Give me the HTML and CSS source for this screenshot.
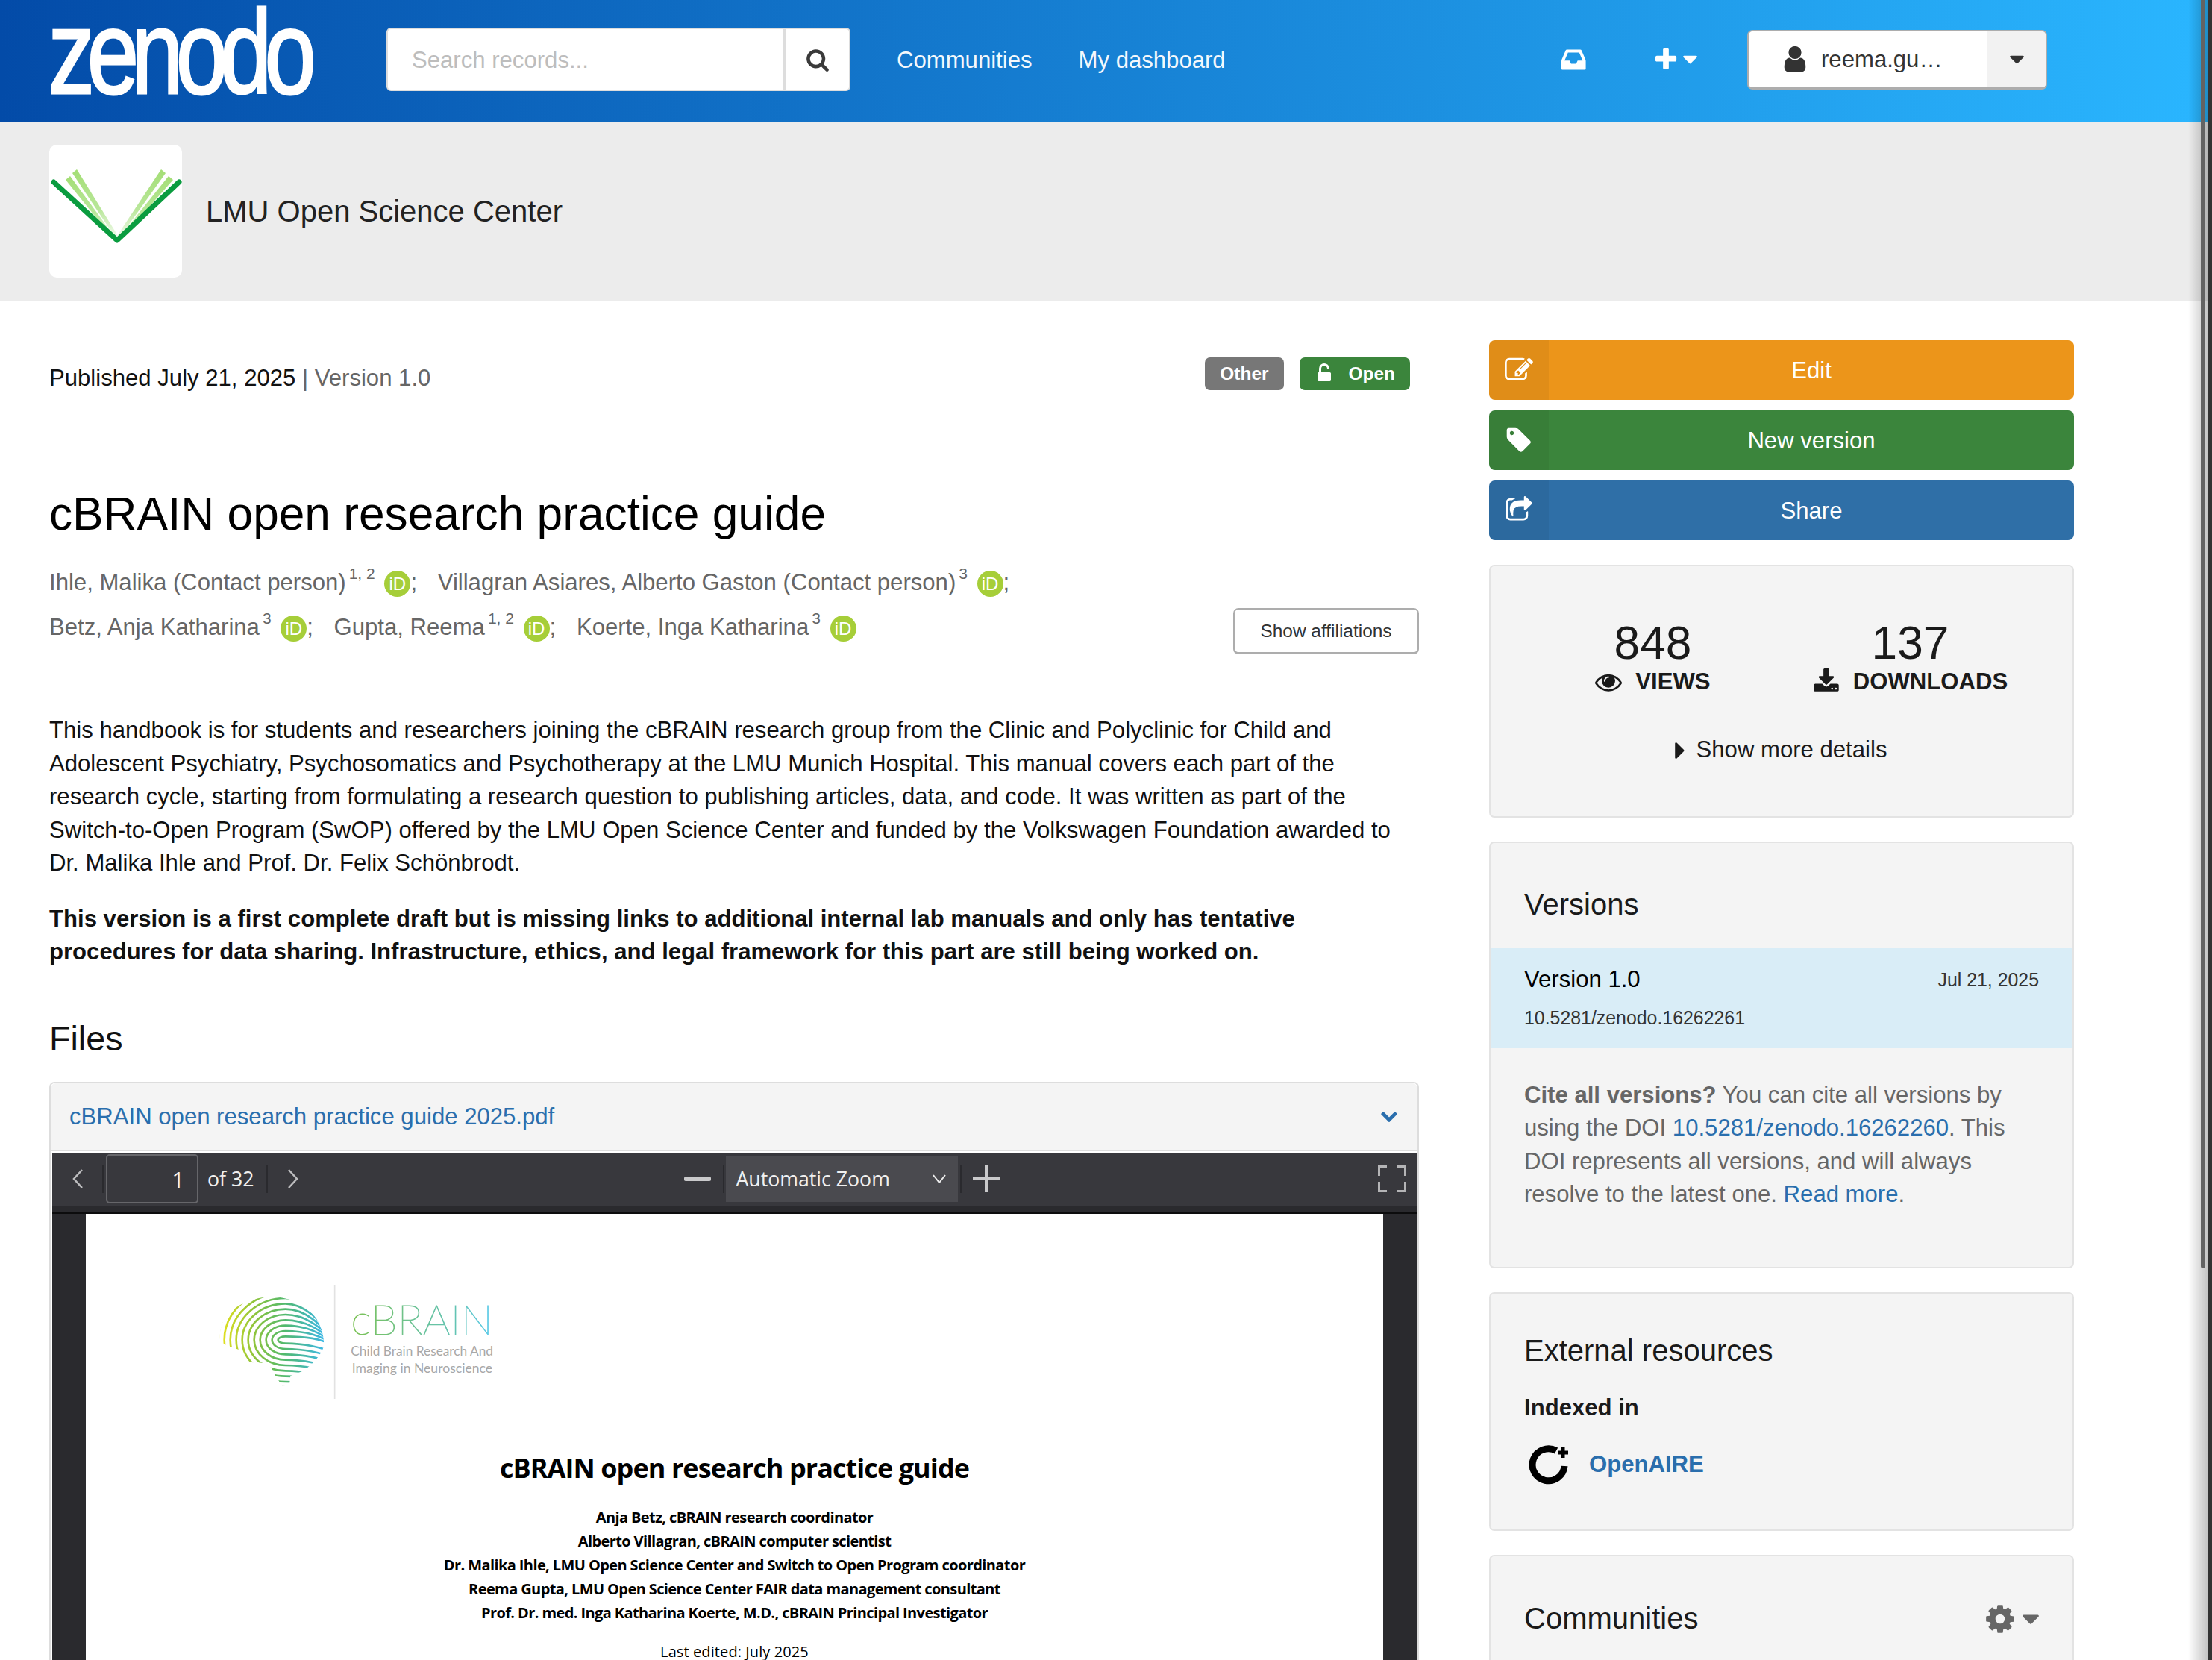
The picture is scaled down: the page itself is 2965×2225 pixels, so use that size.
FILE: index.html
```html
<!DOCTYPE html>
<html lang="en">
<head>
<meta charset="utf-8">
<title>cBRAIN open research practice guide</title>
<link rel="stylesheet" href="styles.css">
</head>
<body>
<svg class="defs" width="0" height="0" aria-hidden="true">
  <symbol id="i-search" viewBox="0 0 1792 1792"><path d="M1216 832q0-185-131.5-316.5t-316.5-131.5-316.5 131.5-131.5 316.5 131.5 316.5 316.5 131.5 316.5-131.5 131.5-316.5zm512 832q0 52-38 90t-90 38q-54 0-90-38l-343-342q-179 124-399 124-143 0-273.5-55.5t-225-150-150-225-55.5-273.5 55.5-273.5 150-225 225-150 273.5-55.5 273.5 55.5 225 150 150 225 55.5 273.5q0 220-124 399l343 343q37 37 37 90z"/></symbol>
  <symbol id="i-caret-down" viewBox="0 0 1792 1792"><path d="M1408 704q0 26-19 45l-448 448q-19 19-45 19t-45-19l-448-448q-19-19-19-45t19-45 45-19h896q26 0 45 19t19 45z"/></symbol>
  <symbol id="i-caret-right" viewBox="0 0 1792 1792"><path d="M1152 896q0 26-19 45l-448 448q-19 19-45 19t-45-19-19-45v-896q0-26 19-45t45-19 45 19l448 448q19 19 19 45z"/></symbol>
  <symbol id="i-plus" viewBox="0 0 1792 1792"><path d="M1600 736v192q0 40-28 68t-68 28h-416v416q0 40-28 68t-68 28h-192q-40 0-68-28t-28-68v-416h-416q-40 0-68-28t-28-68v-192q0-40 28-68t68-28h416v-416q0-40 28-68t68-28h192q40 0 68 28t28 68v416h416q40 0 68 28t28 68z"/></symbol>
  <symbol id="i-user" viewBox="0 0 1792 1792"><path d="M1536 1399q0 109-62.5 187t-150.5 78h-854q-88 0-150.5-78t-62.5-187q0-85 8.5-160.5t31.5-152 58.5-131 94-89 134.5-34.5q131 128 313 128t313-128q76 0 134.5 34.5t94 89 58.5 131 31.5 152 8.5 160.5zm-256-887q0 159-112.5 271.5t-271.5 112.5-271.5-112.5-112.5-271.5 112.5-271.5 271.5-112.5 271.5 112.5 112.5 271.5z"/></symbol>
  <symbol id="i-inbox" viewBox="0 0 1792 1792"><path d="M1023 960h316q-1-3-2.5-8.5t-2.5-7.5l-212-496h-708l-212 496q-1 3-2.5 8.5t-2.5 7.5h316l95 192h320zm513 30v482q0 26-19 45t-45 19h-1408q-26 0-45-19t-19-45v-482q0-62 25-123l238-552q10-25 36.5-42t52.5-17h832q26 0 52.5 17t36.5 42l238 552q25 61 25 123z"/></symbol>
  <symbol id="i-unlock" viewBox="0 0 1792 1792"><path d="M1376 768q40 0 68 28t28 68v576q0 40-28 68t-68 28h-960q-40 0-68-28t-28-68v-576q0-40 28-68t68-28h32v-320q0-185 131.5-316.5t316.5-131.5 316.5 131.5 131.5 316.5q0 26-19 45t-45 19h-64q-26 0-45-19t-19-45q0-106-75-181t-181-75-181 75-75 181v320h736z"/></symbol>
  <symbol id="i-edit" viewBox="0 0 1792 1792"><path d="M888 1184l116-116-152-152-116 116v56h96v96h56zm440-720q-16-16-33 1l-350 350q-17 17-1 33t33-1l350-350q17-17 1-33zm80 594v190q0 119-84.5 203.5t-203.5 84.5h-832q-119 0-203.5-84.5t-84.5-203.5v-832q0-119 84.5-203.5t203.5-84.5h832q63 0 117 25 15 7 18 23 3 17-9 29l-49 49q-14 14-32 8-23-6-45-6h-832q-66 0-113 47t-47 113v832q0 66 47 113t113 47h832q66 0 113-47t47-113v-126q0-13 9-22l64-64q15-15 35-7t20 29zm-96-738l288 288-672 672h-288v-288zm444 132l-92 92-288-288 92-92q28-28 68-28t68 28l152 152q28 28 28 68t-28 68z"/></symbol>
  <symbol id="i-tag" viewBox="0 0 1792 1792"><path d="M576 448q0-53-37.5-90.5t-90.5-37.5-90.5 37.5-37.5 90.5 37.5 90.5 90.5 37.5 90.5-37.5 37.5-90.5zm1067 576q0 53-37 90l-491 492q-39 37-91 37-53 0-90-37l-715-716q-38-37-64.5-101t-26.5-117v-416q0-52 38-90t90-38h416q53 0 117 26.5t102 64.5l715 714q37 39 37 91z"/></symbol>
  <symbol id="i-share" viewBox="0 0 1792 1792"><path d="M1472 989v259q0 119-84.5 203.5t-203.5 84.5h-832q-119 0-203.5-84.5t-84.5-203.5v-832q0-119 84.5-203.5t203.5-84.5h255q13 0 22.5 9.5t9.5 22.5q0 27-26 32-77 26-133 60-10 4-16 4h-112q-66 0-113 47t-47 113v832q0 66 47 113t113 47h832q66 0 113-47t47-113v-214q0-19 18-29 28-13 54-37 16-16 35-8 21 9 21 29zm237-496l-384 384q-18 19-45 19-12 0-25-5-39-17-39-59v-192h-160q-323 0-438 131-119 137-74 473 3 23-20 34-8 2-12 2-16 0-26-13-10-14-21-31t-39.5-68.5-49.5-99.5-38.5-114-17.5-122q0-49 3.5-91t14-90 28-88 47-81.5 68.5-74 94.5-61.5 124.5-48.5 159.5-30.5 196.5-11h160v-192q0-42 39-59 13-5 25-5 26 0 45 19l384 384q19 19 19 45t-19 45z"/></symbol>
  <symbol id="i-eye" viewBox="0 0 1792 1792"><path d="M1664 960q-152-236-381-353 61 104 61 225 0 185-131.5 316.5t-316.5 131.5-316.5-131.5-131.5-316.5q0-121 61-225-229 117-381 353 133 205 333.5 326.5t434.5 121.5 434.5-121.5 333.5-326.5zm-720-384q0-20-14-34t-34-14q-125 0-214.5 89.5t-89.5 214.5q0 20 14 34t34 14 34-14 14-34q0-86 61-147t147-61q20 0 34-14t14-34zm848 384q0 34-20 69-140 230-376.5 368.5t-499.5 138.5-499.5-139-376.5-368q-20-35-20-69t20-69q140-229 376.5-368t499.5-139 499.5 139 376.5 368q20 35 20 69z"/></symbol>
  <symbol id="i-download" viewBox="0 0 1792 1792"><path d="M1344 1344q0-26-19-45t-45-19-45 19-19 45 19 45 45 19 45-19 19-45zm256 0q0-26-19-45t-45-19-45 19-19 45 19 45 45 19 45-19 19-45zm128-224v320q0 40-28 68t-68 28h-1472q-40 0-68-28t-28-68v-320q0-40 28-68t68-28h465l135 136q58 56 136 56t136-56l136-136h464q40 0 68 28t28 68zm-325-569q17 41-14 70l-448 448q-18 19-45 19t-45-19l-448-448q-31-29-14-70 17-39 59-39h256v-448q0-26 19-45t45-19h256q26 0 45 19t19 45v448h256q42 0 59 39z"/></symbol>
  <symbol id="i-chevron-down" viewBox="0 0 1792 1792"><path d="M1683 808l-742 741q-19 19-45 19t-45-19l-742-741q-19-19-19-45.5t19-45.5l166-165q19-19 45-19t45 19l531 531 531-531q19-19 45-19t45 19l166 165q19 19 19 45.5t-19 45.5z"/></symbol>
  <symbol id="i-cog" viewBox="0 0 1792 1792"><path d="M1152 896q0-106-75-181t-181-75-181 75-75 181 75 181 181 75 181-75 75-181zm512-109v222q0 12-8 23t-20 13l-185 28q-19 54-39 91 35 50 107 138 10 12 10 25t-9 23q-27 37-99 108t-94 71q-12 0-26-9l-138-108q-44 23-91 38-16 136-29 186-7 28-36 28h-222q-14 0-24.5-8.5t-11.5-21.5l-28-184q-49-16-90-37l-141 107q-10 9-25 9-14 0-25-11-126-114-165-168-7-10-7-23 0-12 8-23 15-21 51-66.5t54-70.5q-27-50-41-99l-183-27q-13-2-21-12.5t-8-23.5v-222q0-12 8-23t19-13l186-28q14-46 39-92-40-57-107-138-10-12-10-24 0-10 9-23 26-36 98.5-107.5t94.5-71.5q13 0 26 10l138 107q44-23 91-38 16-136 29-186 7-28 36-28h222q14 0 24.5 8.5t11.5 21.5l28 184q49 16 90 37l142-107q9-9 24-9 13 0 25 10 129 119 165 170 7 8 7 22 0 12-8 23-15 21-51 66.5t-54 70.5q26 50 41 98l183 28q13 2 21 12.5t8 23.5z"/></symbol>
</svg>

<header class="topbar">
  <svg class="logo" viewBox="0 0 356 130" role="img" aria-label="zenodo"><text class="logo-text" x="-2" y="116" transform="scale(.78 1)">zenodo</text></svg>
  <form class="search">
    <input class="search-input" type="text" placeholder="Search records...">
    <span class="search-btn"><svg class="ic ic-search"><use href="#i-search"/></svg></span>
  </form>
  <nav class="nav">
    <a class="nav-link">Communities</a>
    <a class="nav-link">My dashboard</a>
  </nav>
  <div class="top-actions">
    <svg class="ic ic-inbox"><use href="#i-inbox"/></svg>
    <span class="plus"><svg class="ic ic-plus"><use href="#i-plus"/></svg><svg class="ic ic-plus-caret"><use href="#i-caret-down"/></svg></span>
    <div class="user">
      <span class="user-main"><svg class="ic ic-user"><use href="#i-user"/></svg><span class="user-name">reema.gu…</span></span>
      <span class="user-caret"><svg class="ic ic-user-caret"><use href="#i-caret-down"/></svg></span>
    </div>
  </div>
</header>

<section class="community">
  <div class="community-logo">
    <svg class="v-logo" viewBox="0 0 178 178">
      <defs>
        <linearGradient id="v-fade" x1="0" y1="0" x2="0" y2="1">
          <stop offset="0" stop-color="#a4de76"/>
          <stop offset=".6" stop-color="#b9e79a"/>
          <stop offset="1" stop-color="#f0faea"/>
        </linearGradient>
      </defs>
      <polygon class="v-light" points="31,38 37,33 92,122 87,122"/>
      <polygon class="v-light" points="22,47 28,42 88,124 84,124"/>
      <polygon class="v-light" points="150,33 156,38 96,122 91,122"/>
      <polygon class="v-light" points="160,42 166,47 98,124 94,124"/>
      <polyline class="v-dark" points="6,50 91,128 174,50"/>
    </svg>
  </div>
  <span class="community-name">LMU Open Science Center</span>
</section>

<main class="content">
  <article class="record">
    <div class="meta">
      <p class="published">Published July 21, 2025 <span class="muted">| Version 1.0</span></p>
      <div class="badges">
        <span class="badge badge-gray">Other</span>
        <span class="badge badge-green"><svg class="ic ic-unlock"><use href="#i-unlock"/></svg>Open</span>
      </div>
    </div>
    <h1 class="title">cBRAIN open research practice guide</h1>
    <div class="creators-row">
      <div class="creators">
        <div class="creator-line">
          <span class="creator">Ihle, Malika (Contact person)<sup>1, 2</sup> <span class="orcid">iD</span>;</span>
          <span class="creator">Villagran Asiares, Alberto Gaston (Contact person)<sup>3</sup> <span class="orcid">iD</span>;</span>
        </div>
        <div class="creator-line">
          <span class="creator">Betz, Anja Katharina<sup>3</sup> <span class="orcid">iD</span>;</span>
          <span class="creator">Gupta, Reema<sup>1, 2</sup> <span class="orcid">iD</span>;</span>
          <span class="creator">Koerte, Inga Katharina<sup>3</sup> <span class="orcid">iD</span></span>
        </div>
      </div>
      <button class="affil-btn" type="button">Show affiliations</button>
    </div>
    <p class="abstract">This handbook is for students and researchers joining the cBRAIN research group from the Clinic and Polyclinic for Child and Adolescent Psychiatry, Psychosomatics and Psychotherapy at the LMU Munich Hospital. This manual covers each part of the research cycle, starting from formulating a research question to publishing articles, data, and code. It was written as part of the Switch-to-Open Program (SwOP) offered by the LMU Open Science Center and funded by the Volkswagen Foundation awarded to Dr. Malika Ihle and Prof. Dr. Felix Schönbrodt.</p>
    <p class="abstract abstract-bold">This version is a first complete draft but is missing links to additional internal lab manuals and only has tentative procedures for data sharing. Infrastructure, ethics, and legal framework for this part are still being worked on.</p>
    <h2 class="files-title">Files</h2>
    <section class="file-panel">
      <div class="file-head">
        <a class="file-link">cBRAIN open research practice guide 2025.pdf</a>
        <svg class="ic ic-chevron"><use href="#i-chevron-down"/></svg>
      </div>
      <div class="viewer">
        <div class="toolbar">
          <svg class="tool-arrow" viewBox="0 0 16 26"><path d="M14 1 3 13l11 12"/></svg>
          <span class="tool-sep tool-sep-first"></span>
          <input class="page-input" type="text" value="1">
          <span class="of-pages">of 32</span>
          <span class="tool-sep tool-sep-of"></span>
          <svg class="tool-arrow tool-next" viewBox="0 0 16 26"><path d="M2 1l11 12L2 25"/></svg>
          <span class="tool-minus"></span>
          <span class="tool-sep tool-sep-minus"></span>
          <div class="zoom-select">
            <span>Automatic Zoom</span>
            <svg class="zoom-chevron" viewBox="0 0 18 12"><path d="M1 1l8 10 8-10"/></svg>
          </div>
          <span class="tool-sep tool-sep-plus"></span>
          <svg class="tool-plus" viewBox="0 0 36 36"><path d="M18 0v36M0 18h36"/></svg>
          <svg class="tool-full" viewBox="0 0 38 36"><path d="M12 1.500H1.500V14M26 1.500h10.500V14M12 34.500H1.500V22M26 34.500h10.500V22"/></svg>
        </div>
        <div class="toolbar-shade"></div>
        <div class="pdf-stage">
          <div class="pdf-page">
            <svg class="cbrain" viewBox="0 0 1560 720" role="img" aria-label="cBRAIN logo">
              <defs>
                <linearGradient id="brain-grad" gradientUnits="userSpaceOnUse" x1="160" y1="0" x2="580" y2="0">
                  <stop offset="0" stop-color="#e8e21b"/>
                  <stop offset=".32" stop-color="#92c53a"/>
                  <stop offset=".62" stop-color="#52b96c"/>
                  <stop offset="1" stop-color="#3db8e6"/>
                </linearGradient>
                <linearGradient id="word-grad" gradientUnits="userSpaceOnUse" x1="690" y1="0" x2="1258" y2="0">
                  <stop offset="0" stop-color="#7cc254"/>
                  <stop offset=".45" stop-color="#6cc295"/>
                  <stop offset=".75" stop-color="#62c4b5"/>
                  <stop offset="1" stop-color="#5ccbec"/>
                </linearGradient>
                <clipPath id="brain-clip">
                  <path d="M160 350C160 300 175 250 210 225C250 195 310 170 375 172C450 175 510 205 550 260C570 295 580 330 580 370C565 410 530 450 490 472L445 490L440 532L412 530L385 490C375 465 360 445 350 438L272 434C255 415 245 400 240 385L190 368Z"/>
                </clipPath>
              </defs>
              <g class="brain-lines" clip-path="url(#brain-clip)">
                <path d="M640 374C560 337 505 331 425 331C409 331 395 337 395 345C395 353 409 359 425 359C505 359 560 374 640 399"/>
                <path d="M640 371C560 325 505 309 425 309C395 309 371 325 371 345C371 365 395 381 425 381C505 381 560 396 640 421"/>
                <path d="M640 369C560 313 505 287 425 287C382 287 347 313 347 345C347 377 382 403 425 403C505 403 560 418 640 443"/>
                <path d="M640 367C560 301 505 265 425 265C369 265 323 301 323 345C323 389 369 425 425 425C505 425 560 440 640 465"/>
                <path d="M640 365C560 289 505 243 425 243C356 243 299 289 299 345C299 401 356 447 425 447C505 447 560 462 640 487"/>
                <path d="M640 363C560 277 505 221 425 221C343 221 275 277 275 345C275 413 343 469 425 469C505 469 560 484 640 509"/>
                <path d="M640 360C560 265 505 199 425 199C329 199 251 265 251 345C251 425 329 491 425 491C505 491 560 506 640 531"/>
                <path d="M640 358C560 253 505 177 425 177C316 177 227 253 227 345C227 437 316 513 425 513C505 513 560 528 640 553"/>
                <path d="M640 356C560 241 505 155 425 155C303 155 203 241 203 345C203 449 303 535 425 535"/>
                <path d="M425 133C290 133 179 228 179 345C179 462 290 557 425 557"/>
                <path d="M425 111C277 111 155 216 155 345C155 474 277 579 425 579"/>
              </g>
              <line class="cbrain-rule" x1="623" y1="125" x2="623" y2="582"/>
              <text class="cbrain-word" x="688" y="323" textLength="572" lengthAdjust="spacingAndGlyphs">cBRAIN</text>
              <text class="cbrain-sub" x="688" y="408" textLength="572" lengthAdjust="spacingAndGlyphs">Child Brain Research And</text>
              <text class="cbrain-sub" x="692" y="478" textLength="565" lengthAdjust="spacingAndGlyphs">Imaging in Neuroscience</text>
            </svg>
            <h3 class="pdf-title">cBRAIN open research practice guide</h3>
            <div class="pdf-authors">
              <p class="pdf-author">Anja Betz, cBRAIN research coordinator</p>
              <p class="pdf-author">Alberto Villagran, cBRAIN computer scientist</p>
              <p class="pdf-author">Dr. Malika Ihle, LMU Open Science Center and Switch to Open Program coordinator</p>
              <p class="pdf-author">Reema Gupta, LMU Open Science Center FAIR data management consultant</p>
              <p class="pdf-author">Prof. Dr. med. Inga Katharina Koerte, M.D., cBRAIN Principal Investigator</p>
            </div>
            <p class="pdf-edited">Last edited: July 2025</p>
          </div>
        </div>
      </div>
    </section>
  </article>

  <aside class="sidebar">
    <div class="actions">
      <a class="action action-edit"><span class="action-icon"><svg class="ic ic-action"><use href="#i-edit"/></svg></span><span class="action-label">Edit</span></a>
      <a class="action action-new"><span class="action-icon"><svg class="ic ic-action"><use href="#i-tag"/></svg></span><span class="action-label">New version</span></a>
      <a class="action action-share"><span class="action-icon"><svg class="ic ic-action"><use href="#i-share"/></svg></span><span class="action-label">Share</span></a>
    </div>
    <section class="panel stats">
      <div class="stats-grid">
        <div class="stat">
          <div class="stat-num">848</div>
          <div class="stat-label"><svg class="ic ic-eye"><use href="#i-eye"/></svg>VIEWS</div>
        </div>
        <div class="stat">
          <div class="stat-num">137</div>
          <div class="stat-label"><svg class="ic ic-download"><use href="#i-download"/></svg>DOWNLOADS</div>
        </div>
      </div>
      <div class="more"><svg class="ic ic-more"><use href="#i-caret-right"/></svg>Show more details</div>
    </section>
    <section class="panel versions">
      <h4 class="panel-title versions-title">Versions</h4>
      <div class="version-row">
        <div class="version-top"><span class="version-name">Version 1.0</span><span class="version-date">Jul 21, 2025</span></div>
        <div class="version-doi">10.5281/zenodo.16262261</div>
      </div>
      <p class="cite"><strong>Cite all versions?</strong> You can cite all versions by using the DOI <a class="link">10.5281/zenodo.16262260</a>. This DOI represents all versions, and will always resolve to the latest one. <a class="link">Read more</a>.</p>
    </section>
    <section class="panel external">
      <h4 class="panel-title">External resources</h4>
      <div class="indexed">Indexed in</div>
      <div class="openaire">
        <svg class="openaire-logo" viewBox="0 0 54 54"><path class="oa-ring" d="M37 8.500A21.500 21.500 0 1 0 48 29"/><path class="oa-plus" d="M46 4v14M39 11h14"/></svg>
        <a class="openaire-link">OpenAIRE</a>
      </div>
    </section>
    <section class="panel communities">
      <div class="communities-head">
        <h4 class="panel-title">Communities</h4>
        <span class="cog"><svg class="ic ic-cog"><use href="#i-cog"/></svg><svg class="ic ic-cog-caret"><use href="#i-caret-down"/></svg></span>
      </div>
    </section>
  </aside>
</main>

<div class="scrollbar"><div class="scroll-thumb"></div><div class="scroll-track"></div></div>
</body>
</html>
```

FILE: styles.css
```css
* { box-sizing: border-box; }
html, body { margin: 0; height: 2225px; overflow: hidden; background: #fff; }
body { font-family: "Liberation Sans", Arial, sans-serif; font-size: 31.11px; line-height: 44.44px; color: #111; position: relative; }
p, h1, h2, h3, h4 { margin: 0; font-weight: 400; }
.defs { position: absolute; }
.ic { display: block; fill: currentColor; flex: none; }

/* top bar */
.topbar { height: 163px; display: flex; align-items: center; padding-left: 66px; background: linear-gradient(90deg, #034ba8, #2ab6ff); color: #fff; }
.logo { width: 356px; height: 130px; flex: none; margin-top: -16px; overflow: visible; }
.logo-text { font-family: "Liberation Sans", Arial, sans-serif; font-size: 160px; letter-spacing: -12.8px; fill: #fff; stroke: #fff; stroke-width: 3px; }
.search { display: flex; width: 622px; height: 85px; margin-left: 96px; background: #fff; border: 2px solid #ddd; border-radius: 6px; margin-top: -4px; }
.search-input { flex: 1; min-width: 0; border: 0; outline: 0; background: transparent; padding: 3px 32px 0; font: inherit; color: #333; }
.search-input::placeholder { color: #bdbdbd; opacity: 1; }
.search-btn { width: 89px; display: flex; align-items: center; justify-content: center; border-left: 4px solid #ddd; color: #3a3a3a; }
.ic-search { width: 32px; height: 32px; }
.nav { display: flex; gap: 62px; margin-left: 62px; margin-top: -1px; }
.nav-link { color: #f4f8fc; }
.top-actions { display: flex; align-items: center; margin-left: auto; margin-right: 221px; margin-top: -4px; }
.ic-inbox { width: 38px; height: 38px; }
.plus { display: flex; align-items: center; margin-left: 84px; }
.ic-plus { width: 36px; height: 36px; }
.ic-plus-caret { width: 33px; height: 33px; margin-left: -2px; }
.user { display: flex; width: 402px; height: 80px; margin-left: 60px; background: #fff; border: 2px solid #adadad; border-bottom-width: 3px; border-radius: 7px; overflow: hidden; color: #333; }
.user-main { flex: 1; display: flex; align-items: center; padding-left: 42px; }
.ic-user { width: 40px; height: 40px; }
.user-name { margin-left: 15px; padding-top: 3px; }
.user-caret { width: 78px; background: #f2f2f2; display: flex; align-items: center; justify-content: center; }
.ic-user-caret { width: 33px; height: 33px; }

/* community band */
.community { height: 240px; display: flex; align-items: center; padding-left: 66px; background: #ececec; }
.community-logo { width: 178px; height: 178px; background: #fff; border-radius: 10px; }
.v-logo { display: block; width: 178px; height: 178px; overflow: visible; }
.v-light { fill: url(#v-fade); }
.v-dark { fill: none; stroke: #0a9c3f; stroke-width: 7px; stroke-linecap: round; stroke-linejoin: round; }
.community-name { margin-left: 32px; font-size: 40px; color: #222; }

/* layout */
.content { display: flex; gap: 94px; padding-left: 66px; }
.record { width: 1836px; flex: none; }
.sidebar { width: 784px; flex: none; padding-top: 53px; }

/* record head */
.meta { display: flex; justify-content: space-between; align-items: flex-start; padding-top: 76px; }
.published { padding-top: 6px; }
.muted { color: #666; }
.badges { display: flex; gap: 21px; margin-right: 12px; }
.badge { height: 44px; display: flex; align-items: center; padding: 0 20px; border-radius: 7px; font-size: 24.44px; font-weight: 700; line-height: 1; color: #fff; }
.badge-gray { background: #777; }
.badge-green { background: #3b853c; }
.ic-unlock { width: 28px; height: 28px; margin-right: 19px; margin-left: -1px; }
.title { margin-top: 125px; font-size: 62.22px; line-height: 69px; color: #000; }
.creators-row { display: flex; justify-content: space-between; align-items: flex-end; margin-top: 28px; }
.creator-line { height: 60px; line-height: 60px; color: #666; white-space: nowrap; }
.creator { margin-right: 19px; }
sup { font-size: 21px; line-height: 0; vertical-align: baseline; position: relative; top: -15px; margin-left: 4px; }
.orcid { display: inline-block; width: 35px; height: 35px; margin-left: 4px; border-radius: 50%; background: #a6ce39; color: #fff; font-size: 24px; line-height: 35px; text-align: center; vertical-align: 0; }
.affil-btn { width: 249px; height: 62px; margin-bottom: -6px; background: #fff; border: 2px solid #adadad; border-bottom-width: 3px; border-radius: 7px; padding: 0; font: 24.44px "Liberation Sans", Arial, sans-serif; color: #333; }
.abstract { margin-top: 86px; }
.abstract-bold { margin-top: 30px; font-weight: 700; }
.files-title { margin-top: 67px; font-size: 46.67px; line-height: 52px; }

/* file panel */
.file-panel { margin-top: 32px; border: 2px solid #ddd; border-radius: 7px 7px 0 0; border-bottom: 0; background: #fff; }
.file-head { height: 91px; display: flex; align-items: center; justify-content: space-between; padding: 2px 26px 0 25px; background: #f4f4f4; border-bottom: 2px solid #ddd; border-radius: 7px 7px 0 0; }
.file-link { color: #2a6ead; }
.ic-chevron { width: 24px; height: 24px; color: #2a6ead; margin-top: -4px; }
.viewer { margin: 2px 1px 0 2px; background: #2a2a2e; }
.toolbar { height: 71px; display: flex; align-items: center; background: #38383d; color: #f0f0f0; font-family: "Open Sans", sans-serif; font-size: 26.7px; }
.tool-arrow { width: 16px; height: 26px; margin-left: 26px; fill: none; stroke: #bdbdbf; stroke-width: 2.500px; flex: none; }
.tool-next { margin-left: 26px; }
.tool-sep { width: 2px; height: 38px; background: #2a2a2e; flex: none; }
.tool-sep-first { margin-left: 25px; }
.page-input { width: 124px; height: 66px; margin-left: 3px; background: transparent; border: 2px solid #66666a; border-radius: 5px; padding: 0 17px 0 0; text-align: right; font: inherit; font-size: 29px; color: #f0f0f0; }
.of-pages { margin-left: 12px; white-space: nowrap; }
.tool-sep-of { margin-left: 17px; }
.tool-minus { width: 36px; height: 6px; margin-left: 516px; border-radius: 2px; background: #c9c9cb; flex: none; }
.tool-sep-minus { margin-left: 16px; }
.zoom-select { width: 311px; height: 62px; margin-left: 2px; padding: 0 16px 0 13px; display: flex; align-items: center; justify-content: space-between; background: #4a4a4f; flex: none; }
.zoom-chevron { width: 18px; height: 12px; fill: none; stroke: #eee; stroke-width: 2px; }
.tool-sep-plus { margin-left: 3px; }
.tool-plus { width: 36px; height: 36px; margin-left: 15px; fill: none; stroke: #c9c9cb; stroke-width: 4px; flex: none; }
.tool-full { width: 38px; height: 36px; margin-left: auto; margin-right: 14px; fill: none; stroke: #b4b4b6; stroke-width: 3px; flex: none; }
.toolbar-shade { height: 11px; background: #2a2a2e; border-bottom: 2px solid #0c0c0d; }
.pdf-stage { padding: 0 45px; height: 800px; }
.pdf-page { height: 100%; background: #fff; text-align: center; color: #000; font-family: "Open Sans", sans-serif; padding-top: 54px; }
.cbrain { display: block; width: 520px; height: 240px; margin-left: 126px; }
.brain-lines path { fill: none; stroke: url(#brain-grad); stroke-width: 8px; }
.cbrain-rule { stroke: #e2e2e2; stroke-width: 5px; }
.cbrain-word { font-family: Lato, sans-serif; font-weight: 100; font-size: 166px; fill: url(#word-grad); stroke: url(#word-grad); stroke-width: 2.500px; }
.cbrain-sub { font-family: Lato, sans-serif; font-weight: 400; font-size: 50px; fill: #a8a8a8; }
.pdf-title { margin-top: 23px; font-size: 36px; line-height: 48px; font-weight: 700; letter-spacing: -.93px; }
.pdf-authors { margin-top: 26px; }
.pdf-author { font-size: 20px; line-height: 32px; font-weight: 700; letter-spacing: -.6px; }
.pdf-edited { margin-top: 20px; font-size: 20px; line-height: 32px; letter-spacing: .1px; }

/* sidebar */
.actions { display: flex; flex-direction: column; gap: 14px; }
.action { height: 80px; display: flex; border-radius: 8px; overflow: hidden; color: #fff; }
.action-edit { background: #ec951a; }
.action-new { background: #3b853c; }
.action-share { background: #2f6fa7; }
.action-icon { width: 80px; display: flex; align-items: center; justify-content: center; background: rgba(0, 0, 0, .05); }
.ic-action { width: 38px; height: 38px; }
.action-label { flex: 1; display: flex; align-items: center; justify-content: center; padding-top: 2px; }
.panel { margin-top: 32px; background: #f4f4f4; border: 2px solid #e3e3e3; border-radius: 7px; }
.stats { margin-top: 33px; padding: 71px 45px 66px; text-align: center; }
.stats-grid { display: grid; grid-template-columns: 1fr 1fr; }
.stat-num { font-size: 62.22px; line-height: 63px; color: #1a1a1a; }
.stat-label { display: flex; align-items: center; justify-content: center; gap: 18px; margin-top: -1px; font-weight: 700; color: #1a1a1a; }
.ic-eye { width: 36px; height: 36px; }
.ic-download { width: 36px; height: 36px; }
.more { display: flex; align-items: center; justify-content: center; margin-top: 47px; padding-right: 14px; color: #1a1a1a; }
.ic-more { width: 38px; height: 38px; margin-right: 3px; }
.panel-title { font-size: 40px; line-height: 45px; color: #1a1a1a; }
.versions { padding-top: 60px; }
.versions-title { padding-left: 45px; }
.version-row { margin-top: 36px; padding: 20px 45px 22.500px; background: #d9edf7; }
.version-top { display: flex; justify-content: space-between; }
.version-name { color: #000; }
.version-date { font-size: 24.89px; color: #333; }
.version-doi { margin-top: 11px; font-size: 24.89px; line-height: 36px; color: #333; }
.cite { padding: 41px 45px 74px; color: #666; }
.link { color: #2a6ead; }
.external { padding: 54px 45px 60px; }
.indexed { margin-top: 32px; font-weight: 700; color: #1a1a1a; }
.openaire { display: flex; align-items: center; margin-top: 27px; padding-left: 6px; }
.openaire-logo { width: 54px; height: 54px; flex: none; }
.oa-ring { fill: none; stroke: #000; stroke-width: 9px; }
.oa-plus { fill: none; stroke: #000; stroke-width: 5px; }
.openaire-link { margin-left: 27px; font-weight: 700; color: #2a6ead; }
.communities { padding: 61px 45px 0; height: 400px; }
.communities-head { display: flex; justify-content: space-between; align-items: center; }
.cog { display: flex; align-items: center; color: #666; }
.ic-cog { width: 44px; height: 44px; }
.ic-cog-caret { width: 38px; height: 38px; margin-left: 0; margin-right: -8px; }

/* window scrollbar overlay */
.scrollbar { position: absolute; top: 0; right: 0; width: 32px; height: 2225px; background: linear-gradient(90deg, rgba(0, 0, 0, 0), rgba(0, 0, 0, .24) 85%); }
.scroll-thumb { position: absolute; top: 0; left: 17px; width: 6px; height: 1700px; background: #636363; border-radius: 0 0 3px 3px; }
.scroll-track { position: absolute; top: 0; right: 0; width: 6px; height: 100%; background: #333; }
```
